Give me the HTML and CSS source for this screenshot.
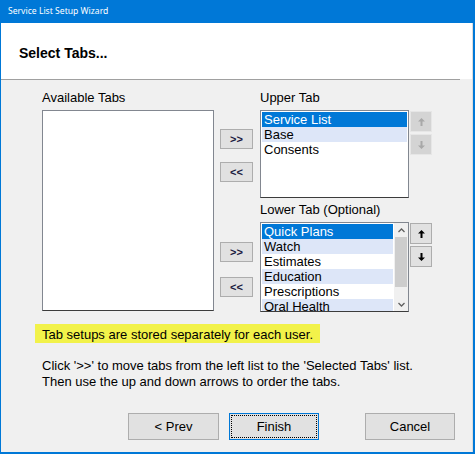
FILE: index.html
```html
<!DOCTYPE html>
<html>
<head>
<meta charset="utf-8">
<link rel="stylesheet" href="styles.css">
</head>
<body>
<div class="window">
  <div class="titlebar">Service List Setup Wizard</div>
  <div class="client">
    <div class="header"><h1 class="heading">Select Tabs...</h1></div>
    <div class="header-rule"></div>
    <div class="main">
      <div class="left">
        <div class="label">Available Tabs</div>
        <div class="listbox avail"></div>
      </div>
      <div class="right">
        <div class="section upper">
          <div class="label sec-label">Upper Tab</div>
          <div class="movecol mc-upper">
            <button class="btn move">&gt;&gt;</button>
            <button class="btn move">&lt;&lt;</button>
          </div>
          <div class="listbox list-upper">
            <div class="items">
              <div class="item sel">Service List</div>
              <div class="item alt">Base</div>
              <div class="item">Consents</div>
            </div>
          </div>
          <div class="arrowcol">
            <button class="btn arrow disabled"><svg width="7" height="8" viewBox="0 0 7 8"><polygon points="3.5,0 7,3.5 4.5,3.5 4.5,8 2.5,8 2.5,3.5 0,3.5" /></svg></button>
            <button class="btn arrow disabled"><svg width="7" height="8" viewBox="0 0 7 8"><polygon points="3.5,8 7,4.5 4.5,4.5 4.5,0 2.5,0 2.5,4.5 0,4.5" /></svg></button>
          </div>
        </div>
        <div class="section lower">
          <div class="label sec-label">Lower Tab (Optional)</div>
          <div class="movecol mc-lower">
            <button class="btn move">&gt;&gt;</button>
            <button class="btn move">&lt;&lt;</button>
          </div>
          <div class="listbox list-lower">
            <div class="items">
              <div class="item sel">Quick Plans</div>
              <div class="item alt">Watch</div>
              <div class="item">Estimates</div>
              <div class="item alt">Education</div>
              <div class="item">Prescriptions</div>
              <div class="item alt">Oral Health</div>
            </div>
            <div class="scrollbar">
              <div class="sb-btn"><svg width="7" height="5" viewBox="0 0 7 5"><polyline points="0.5,4 3.5,1 6.5,4" /></svg></div>
              <div class="sb-track"><div class="sb-thumb"></div></div>
              <div class="sb-btn"><svg width="7" height="5" viewBox="0 0 7 5"><polyline points="0.5,1 3.5,4 6.5,1" /></svg></div>
            </div>
          </div>
          <div class="arrowcol lower-arrows">
            <button class="btn arrow"><svg width="7" height="8" viewBox="0 0 7 8"><polygon points="3.5,0 7,3.5 4.5,3.5 4.5,8 2.5,8 2.5,3.5 0,3.5" /></svg></button>
            <button class="btn arrow"><svg width="7" height="8" viewBox="0 0 7 8"><polygon points="3.5,8 7,4.5 4.5,4.5 4.5,0 2.5,0 2.5,4.5 0,4.5" /></svg></button>
          </div>
        </div>
      </div>
    </div>
    <div class="note">Tab setups are stored separately for each user.</div>
    <p class="instr">Click '&gt;&gt;' to move tabs from the left list to the 'Selected Tabs' list.<br>Then use the up and down arrows to order the tabs.</p>
    <div class="actions">
      <button class="btn action prev">&lt; Prev</button>
      <button class="btn action finish">Finish</button>
      <button class="btn action cancel">Cancel</button>
    </div>
  </div>
</div>
</body>
</html>
```

FILE: styles.css
```css
* { box-sizing: border-box; }
html, body { margin: 0; padding: 0; background: #fff; }
body {
  font-family: "Liberation Sans", Arial, sans-serif;
  font-size: 13px;
  color: #000;
}
.window {
  width: 475px;
  height: 454px;
  border-left: 1px solid #0078d7;
  border-right: 2px solid #0078d7;
  border-bottom: 2px solid #0078d7;
  background: #f0f0f0;
  display: flex;
  flex-direction: column;
}
.titlebar {
  height: 23px;
  margin-left: -1px;
  margin-right: -2px;
  background: #0078d7;
  color: #fff;
  font-family: "Noto Sans", "Open Sans", sans-serif;
  font-size: 8.6px;
  line-height: 23px;
  padding-left: 8px;
}
.client {
  flex: 1;
  border-right: 1px solid #dcdcdc;
}
.header {
  background: #fff;
  height: 56px;
  display: flex;
  align-items: center;
  padding-left: 18px;
}
.heading {
  margin: 0;
  font-size: 14px;
  font-weight: bold;
  padding-top: 4px;
}
.header-rule {
  width: 459px;
  height: 1px;
  background: #a0a0a0;
}
.main {
  display: flex;
  padding-top: 11px;
  padding-left: 41px;
}
.label {
  height: 14px;
  line-height: 14px;
  margin-bottom: 5px;
}
.left { width: 172px; }
.listbox {
  background: #fff;
  border: 1px solid #828790;
  border-bottom-color: #3c3c3c;
}
.avail { height: 201px; }
.right {
  margin-left: 6px;
  display: flex;
  flex-direction: column;
  gap: 5px;
}
.section {
  display: grid;
  grid-template-columns: 33px 7px 149px 1px 22px;
}
.sec-label { grid-column: 3; grid-row: 1; }
.movecol {
  grid-column: 1;
  grid-row: 2;
  display: flex;
  flex-direction: column;
}
.list-upper, .list-lower { grid-column: 3; grid-row: 2; }
.arrowcol { grid-column: 5; grid-row: 2; }
.mc-upper { padding-top: 19px; gap: 13px; }
.mc-lower { padding-top: 20px; gap: 15px; }
.btn {
  font-family: "Liberation Sans", Arial, sans-serif;
  background: #e1e1e1;
  border: 1px solid #adadad;
  color: #000;
  padding: 0;
  margin: 0;
  display: flex;
  align-items: center;
  justify-content: center;
}
.move {
  width: 33px;
  height: 20px;
  font-size: 11px;
  font-weight: bold;
  color: #1a1a40;
}
.list-upper { height: 88px; padding: 1px; }
.list-lower { height: 90px; padding: 0 0 0 1px; display: flex; }
.items { flex: 1; overflow: hidden; }
.list-lower .items { padding-top: 1px; margin-right: 1px; }
.item {
  height: 15px;
  line-height: 15px;
  padding-left: 2px;
  font-size: 13px;
  white-space: nowrap;
}
.item.sel { background: #0078d7; color: #fff; }
.item.alt { background: #dde6f8; }
.scrollbar {
  width: 14px;
  display: flex;
  flex-direction: column;
  background: #f0f0f0;
}
.sb-btn {
  height: 14px;
  display: flex;
  align-items: center;
  justify-content: center;
}
.sb-btn polyline { fill: none; stroke: #606060; stroke-width: 1.3; }
.sb-track { flex: 1; }
.sb-thumb { height: 50px; background: #cdcdcd; margin: 0 1px; }
.arrowcol {
  display: flex;
  flex-direction: column;
  gap: 2px;
  padding-top: 1px;
}
.arrow {
  width: 22px;
  height: 21px;
}
.arrow polygon { fill: #000; }
.arrow.disabled { background: #d4d4d4; border-color: #e6e6e6; }
.arrow.disabled polygon { fill: #a8a8a8; }
.note {
  margin-top: 12px;
  margin-left: 34px;
  display: inline-block;
  background: #f2f24a;
  height: 19px;
  line-height: 19px;
  padding: 1px 7px 0 7px;
}
.instr {
  margin: 15px 0 0 41px;
  line-height: 16px;
}
.actions {
  display: flex;
  margin-top: 23px;
  padding-left: 127px;
}
.action {
  height: 27px;
  width: 90px;
  font-size: 13px;
}
.prev { width: 91px; }
.finish {
  margin-left: 10px;
  border-color: #0078d7;
  outline: 1px dotted #000;
  outline-offset: -3px;
}
.cancel { margin-left: 46px; }
```
